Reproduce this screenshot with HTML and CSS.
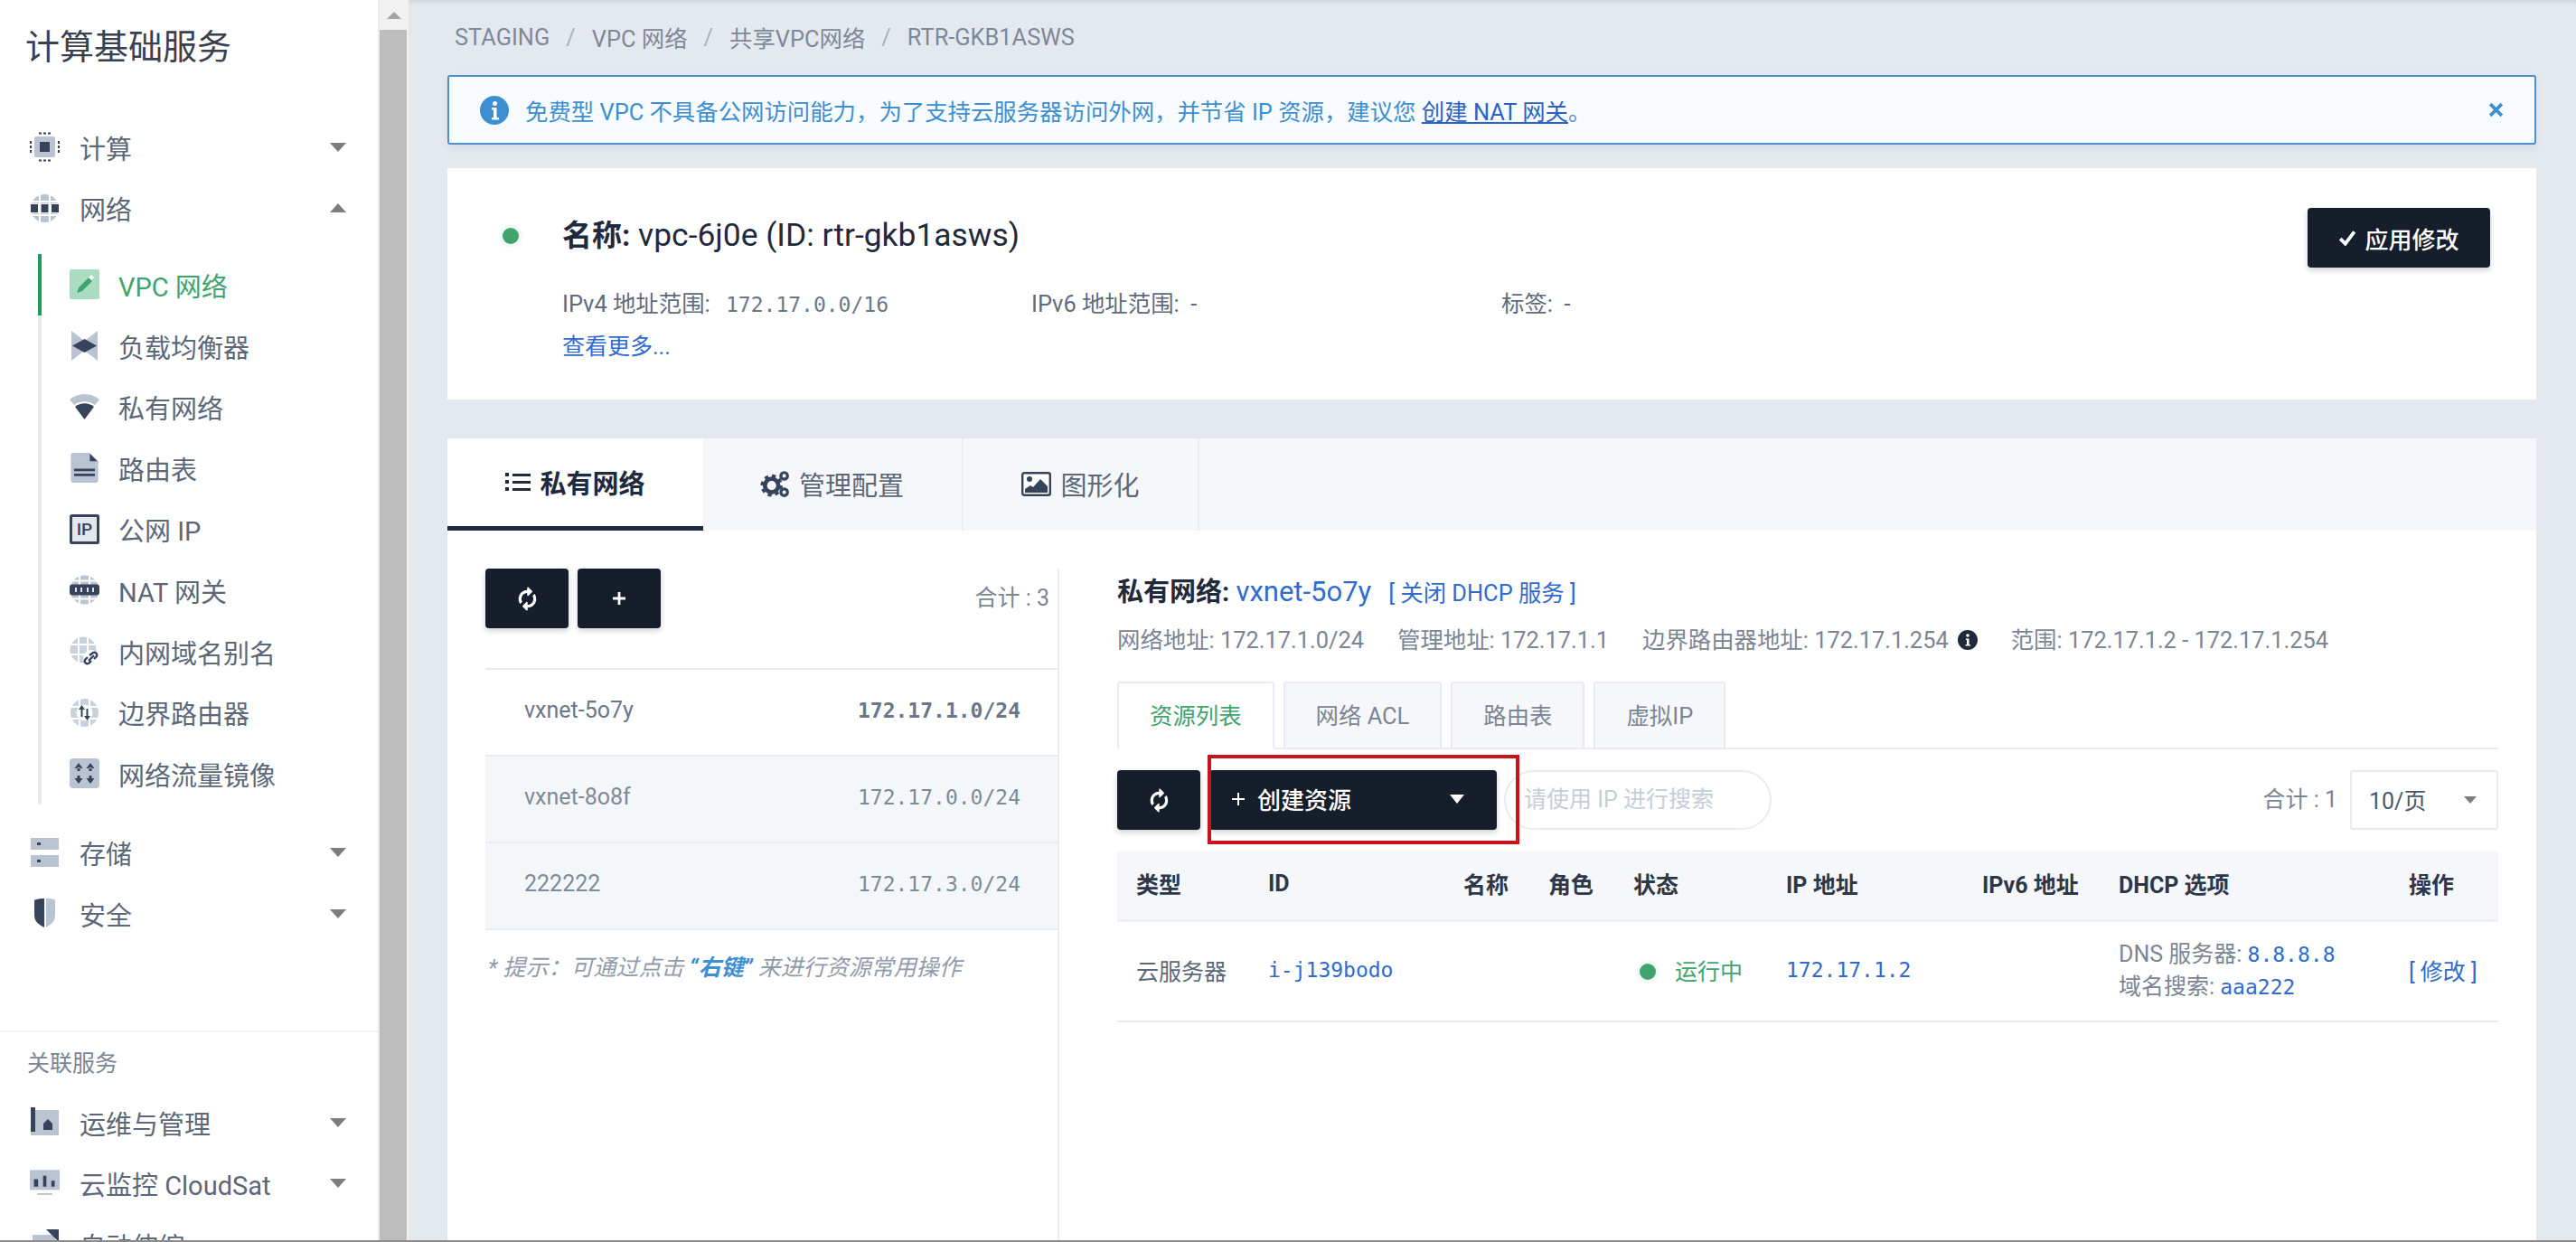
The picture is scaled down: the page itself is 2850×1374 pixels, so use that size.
FILE: index.html

```html
<!DOCTYPE html>
<html lang="zh-CN">
<head>
  <meta charset="UTF-8">
  <title>VPC 网络</title>
  <link rel="stylesheet" href="styles.css">
</head>
<body>
<div class="app">
  <!-- left menu -->
  <nav class="sidebar">
    <div class="side-title">计算基础服务</div>

    <div class="menu-item">
      <svg class="ico" viewBox="0 0 33 33"><rect x="5" y="5" width="23" height="23" rx="2" fill="#b9c3d1"/><rect x="11" y="11" width="11" height="11" fill="#36435a"/><path d="M10 1.500h3M15 1.500h3M20 1.500h3M10 31.500h3M15 31.500h3M20 31.500h3M1 10v3M1 15v3M1 20v3M32 10v3M32 15v3M32 20v3" stroke="#36435a" stroke-width="2.200"/></svg>
      <span class="menu-text">计算</span><i class="caret"></i>
    </div>
    <div class="menu-item">
      <svg class="ico" viewBox="0 0 33 33"><circle cx="16.500" cy="16.500" r="15.500" fill="#b9c3d1"/><path d="M11 1v31M22 1v31M1 9h31M1 24h31" stroke="#fff" stroke-width="2"/><rect x="0" y="11" width="33" height="11" fill="#fff"/><rect x="1" y="12" width="8" height="9" fill="#36435a"/><rect x="12.500" y="12" width="8" height="9" fill="#36435a"/><rect x="24" y="12" width="8" height="9" fill="#36435a"/></svg>
      <span class="menu-text">网络</span><i class="caret up"></i>
    </div>

    <div class="sub-menu">
      <div class="sub-item active">
        <svg class="ico" viewBox="0 0 33 33"><rect width="33" height="33" rx="2" fill="#a9dcc0"/><path d="M8 25l5-2L27 9l-3-3L10 20z" fill="#fff"/><path d="M8 26l2-6 11-11 4 4-11 11z" fill="#3fa46d"/></svg>
        <span>VPC 网络</span>
      </div>
      <div class="sub-item">
        <svg class="ico" viewBox="0 0 33 33"><path d="M2 0l13 10v13L2 33zM31 0L18 10v13l13 10z" fill="#b9c3d1"/><path d="M3 16.500L16.500 9 30 16.500 16.500 24z" fill="#36435a"/></svg>
        <span>负载均衡器</span>
      </div>
      <div class="sub-item">
        <svg class="ico" viewBox="0 0 33 33"><path d="M0 8C9 0 24 0 33 8l-5 6C21 9 12 9 5 14z" fill="#b9c3d1"/><path d="M6 16c6-5 15-5 21 0L16.500 30z" fill="#36435a"/></svg>
        <span>私有网络</span>
      </div>
      <div class="sub-item">
        <svg class="ico" viewBox="0 0 33 36"><path d="M3 0h20l10 10v23a3 3 0 0 1-3 3H3a3 3 0 0 1-3-3V3a3 3 0 0 1 3-3z" fill="#b9c3d1"/><path d="M23 1l9 9h-9z" fill="#36435a"/><path d="M4 19h25v3H4zM4 25h25v3H4z" fill="#36435a"/></svg>
        <span>路由表</span>
      </div>
      <div class="sub-item">
        <svg class="ico" viewBox="0 0 33 33"><rect x="1.500" y="1.500" width="30" height="30" rx="1" fill="#e3e8ef" stroke="#36435a" stroke-width="3"/><text x="16.500" y="23" text-anchor="middle" class="ico-text">IP</text></svg>
        <span>公网 IP</span>
      </div>
      <div class="sub-item">
        <svg class="ico" viewBox="0 0 33 33"><circle cx="16.500" cy="16.500" r="16" fill="#b9c3d1"/><path d="M11 0v33M22 0v33M0 6.500h33M0 26.500h33" stroke="#fff" stroke-width="2"/><rect x="0" y="10.500" width="33" height="12" rx="3" fill="#36435a"/><path d="M7 14v5M13 14v5M20 14v5M26 14v5" stroke="#dfe4ec" stroke-width="2"/></svg>
        <span>NAT 网关</span>
      </div>
      <div class="sub-item">
        <svg class="ico" viewBox="0 0 33 33"><circle cx="15" cy="15" r="14.500" fill="#c9d1dc"/><path d="M10 0v30M20 0v30M0 9h30M0 20h30" stroke="#fff" stroke-width="2"/><circle cx="24" cy="24" r="9" fill="#fff"/><path d="M22 21l4-3a3 3 0 0 1 4 4l-3 3M24 27l-3 3a3 3 0 0 1-4-4l3-3M21 27l6-6" fill="none" stroke="#36435a" stroke-width="2.400"/></svg>
        <span>内网域名别名</span>
      </div>
      <div class="sub-item">
        <svg class="ico" viewBox="0 0 33 33"><circle cx="16.500" cy="16.500" r="15.500" fill="#c9d1dc"/><path d="M11 1v31M22 1v31M1 10h31M1 23h31" stroke="#fff" stroke-width="2"/><circle cx="16.500" cy="16.500" r="9" fill="#fff"/><path d="M13.500 8l-3.500 5h2.500v8h2v-8H17zM19.500 25l3.500-5h-2.500v-8h-2v8H16z" fill="#36435a"/></svg>
        <span>边界路由器</span>
      </div>
      <div class="sub-item">
        <svg class="ico" viewBox="0 0 33 33"><rect width="33" height="33" rx="4" fill="#b9c3d1"/><path d="M10 5l-4.500 6h9zM23 5l-4.500 6h9zM10 28l-4.500-6h9zM23 28l-4.500-6h9zM8.500 10h3v4h-3zM21.500 10h3v4h-3zM8.500 19h3v4h-3zM21.500 19h3v4h-3z" fill="#36435a"/></svg>
        <span>网络流量镜像</span>
      </div>
    </div>

    <div class="menu-item">
      <svg class="ico" viewBox="0 0 33 33"><rect x="1" width="31" height="13" fill="#b9c3d1"/><rect x="1" y="19" width="31" height="13" fill="#b9c3d1"/><rect x="8" y="5" width="4" height="3" fill="#36435a"/><rect x="8" y="24" width="4" height="3" fill="#36435a"/></svg>
      <span class="menu-text">存储</span><i class="caret"></i>
    </div>
    <div class="menu-item">
      <svg class="ico" viewBox="0 0 33 36"><path d="M4 2C9 0 13 0 16 0v35C9 31 4 28 4 20z" fill="#36435a"/><path d="M18 0c3 0 9 0 11 2v18c0 8-5 11-11 15z" fill="#b9c3d1"/></svg>
      <span class="menu-text">安全</span><i class="caret"></i>
    </div>

    <div class="side-sep">关联服务</div>

    <div class="menu-item">
      <svg class="ico" viewBox="0 0 33 33"><rect x="1" y="3" width="31" height="28" fill="#b9c3d1"/><rect x="1" y="0" width="5" height="27" fill="#36435a"/><path d="M15 25v-7l5-5 5 5v7z" fill="#36435a"/></svg>
      <span class="menu-text">运维与管理</span><i class="caret"></i>
    </div>
    <div class="menu-item">
      <svg class="ico" viewBox="0 0 36 33"><rect width="36" height="24" fill="#b9c3d1"/><rect x="9" y="28" width="18" height="2" fill="#b9c3d1"/><path d="M5 11h5v9H5zM16 7h4v13h-4zM26 13h4v7h-4z" fill="#36435a"/></svg>
      <span class="menu-text">云监控 CloudSat</span><i class="caret"></i>
    </div>
    <div class="menu-item">
      <svg class="ico" viewBox="0 0 33 33"><rect x="3" y="6" width="25" height="24" fill="#b9c3d1"/><path d="M18 0h14v14z" fill="#36435a"/></svg>
      <span class="menu-text">自动伸缩</span><i class="caret"></i>
    </div>
  </nav>

  <div class="scrollbar">
    <div class="scroll-btn"><i></i></div>
    <div class="scroll-thumb"></div>
  </div>

  <main class="main">
    <div class="crumbs">
      <span>STAGING</span><b>/</b><span>VPC 网络</span><b>/</b><span>共享VPC网络</span><b>/</b><span>RTR-GKB1ASWS</span>
    </div>

    <div class="alert">
      <svg class="alert-ico" viewBox="0 0 32 32"><circle cx="16" cy="16" r="16" fill="#3d8fd1"/><circle cx="16.500" cy="8.500" r="2.500" fill="#fff"/><path d="M13 13h5.500v11H21v2.500h-8V24h2v-8.500h-2z" fill="#fff"/></svg>
      <span class="alert-text">免费型 VPC 不具备公网访问能力，为了支持云服务器访问外网，并节省 IP 资源，建议您 <a href="#">创建 NAT 网关</a>。</span>
      <svg class="alert-close" viewBox="0 0 16 16"><path d="M2 2l12 12M14 2L2 14" stroke="#3d8fd1" stroke-width="3.400"/></svg>
    </div>

    <section class="info-card">
      <div class="info-head">
        <i class="status-dot"></i>
        <h2 class="info-title"><b>名称:</b> vpc-6j0e (ID: rtr-gkb1asws)</h2>
      </div>
      <button class="btn btn-apply"><svg class="btn-check" viewBox="0 0 18 16"><path d="M2 9l5 5L16 2" fill="none" stroke="#fff" stroke-width="3.400"/></svg>应用修改</button>
      <div class="info-props">
        <div class="prop-a">IPv4 地址范围: <span class="mono">172.17.0.0/16</span></div>
        <div class="prop-b">IPv6 地址范围: &nbsp;-</div>
        <div>标签: &nbsp;-</div>
      </div>
      <a class="more" href="#">查看更多...</a>
    </section>

    <section class="tab-card">
      <div class="tabs">
        <div class="tab active">
          <svg class="tab-ico" viewBox="0 0 28 24"><path d="M0 2h4v4H0zM0 10h4v4H0zM0 18h4v4H0zM8 3h20v3H8zM8 11h20v3H8zM8 19h20v3H8z" fill="#1f2a3c"/></svg>私有网络
        </div>
        <div class="tab tab-b">
          <svg class="tab-ico cogs" viewBox="0 0 30 28"><circle cx="11" cy="16" r="7" fill="none" stroke="#36435a" stroke-width="4.500"/><circle cx="11" cy="16" r="10" fill="none" stroke="#36435a" stroke-width="3" stroke-dasharray="4 3.850"/><circle cx="24" cy="6" r="3.500" fill="none" stroke="#36435a" stroke-width="3"/><circle cx="24" cy="23" r="3.500" fill="none" stroke="#36435a" stroke-width="3"/></svg>管理配置
        </div>
        <div class="tab tab-c">
          <svg class="tab-ico wide" viewBox="0 0 33 27"><rect x="1.200" y="1.200" width="30.600" height="24.600" rx="2" fill="#fff" stroke="#36435a" stroke-width="2.400"/><circle cx="9" cy="8" r="3" fill="#36435a"/><path d="M4 23v-4l6-4 3 2 8-9 8 8v7z" fill="#36435a"/></svg>图形化
        </div>
        <div class="tab-rest"></div>
      </div>

      <div class="tab-body">
        <!-- network list -->
        <div class="left-panel">
          <div class="left-tools">
            <button class="btn btn-sq"><svg class="refresh" viewBox="0 0 1792 1792"><path d="M1639 1056q0 5-1 7-64 268-268 434.500t-478 166.500q-146 0-282.500-55t-243.500-157l-129 129q-19 19-45 19t-45-19-19-45v-448q0-26 19-45t45-19h448q26 0 45 19t19 45-19 45l-137 137q71 66 161 102t187 36q134 0 250-65t186-179q11-17 53-117 8-23 30-23h192q13 0 22.500 9.500t9.500 22.500zm25-800v448q0 26-19 45t-45 19h-448q-26 0-45-19t-19-45 19-45l138-138q-148-137-349-137-134 0-250 65t-186 179q-11 17-53 117-8 23-30 23h-199q-13 0-22.500-9.500t-9.500-22.500v-7q65-268 270-434.500t480-166.500q146 0 284 55.500t245 156.500l130-129q19-19 45-19t45 19 19 45z" fill="#fff"/></svg></button>
            <button class="btn btn-sq"><svg class="plus" viewBox="0 0 16 16"><path d="M8 1v14M1 8h14" stroke="#fff" stroke-width="2.800"/></svg></button>
            <span class="total">合计 : 3</span>
          </div>
          <div class="net-row first"><span class="net-name">vxnet-5o7y</span><span class="mono strong">172.17.1.0/24</span></div>
          <div class="net-row alt"><span class="net-name">vxnet-8o8f</span><span class="mono">172.17.0.0/24</span></div>
          <div class="net-row alt"><span class="net-name">222222</span><span class="mono">172.17.3.0/24</span></div>
          <p class="tip">* 提示：可通过点击 <b>“右键”</b> 来进行资源常用操作</p>
        </div>

        <!-- selected network -->
        <div class="right-panel">
          <div class="vx-title"><b>私有网络:</b> <a href="#">vxnet-5o7y</a><a class="vx-dhcp" href="#">[ 关闭 DHCP 服务 ]</a></div>
          <div class="vx-props">
            <span>网络地址: 172.17.1.0/24</span>
            <span>管理地址: 172.17.1.1</span>
            <span class="with-ico">边界路由器地址: 172.17.1.254<svg class="info-ico" viewBox="0 0 22 22"><circle cx="11" cy="11" r="11" fill="#1f2a3c"/><circle cx="11" cy="6" r="1.800" fill="#fff"/><path d="M9 9.500h3.500V16H14v1.500H8.500V16H10v-5H9z" fill="#fff"/></svg></span>
            <span>范围: 172.17.1.2 - 172.17.1.254</span>
          </div>

          <div class="sub-tabs">
            <div class="sub-tab active">资源列表</div>
            <div class="sub-tab">网络 ACL</div>
            <div class="sub-tab">路由表</div>
            <div class="sub-tab">虚拟IP</div>
          </div>

          <div class="toolbar">
            <button class="btn btn-refresh"><svg class="refresh" viewBox="0 0 1792 1792"><path d="M1639 1056q0 5-1 7-64 268-268 434.500t-478 166.500q-146 0-282.500-55t-243.500-157l-129 129q-19 19-45 19t-45-19-19-45v-448q0-26 19-45t45-19h448q26 0 45 19t19 45-19 45l-137 137q71 66 161 102t187 36q134 0 250-65t186-179q11-17 53-117 8-23 30-23h192q13 0 22.500 9.500t9.500 22.500zm25-800v448q0 26-19 45t-45 19h-448q-26 0-45-19t-19-45 19-45l138-138q-148-137-349-137-134 0-250 65t-186 179q-11 17-53 117-8 23-30 23h-199q-13 0-22.500-9.500t-9.500-22.500v-7q65-268 270-434.500t480-166.500q146 0 284 55.500t245 156.500l130-129q19-19 45-19t45 19 19 45z" fill="#fff"/></svg></button>
            <div class="create-wrap">
              <button class="btn btn-create"><svg class="plus" viewBox="0 0 16 16"><path d="M8 1v14M1 8h14" stroke="#fff" stroke-width="2"/></svg><span>创建资源</span><i class="caret white"></i></button>
              <div class="red-box"></div>
            </div>
            <div class="search">请使用 IP 进行搜索</div>
            <span class="total total-r">合计 : 1</span>
            <div class="page-size"><span>10/页</span><i class="caret small"></i></div>
          </div>

          <table class="res-table">
            <thead>
              <tr>
                <th class="c-type">类型</th><th class="c-id">ID</th><th class="c-name">名称</th><th class="c-role">角色</th><th class="c-state">状态</th><th class="c-ip">IP 地址</th><th class="c-ip6">IPv6 地址</th><th class="c-dhcp">DHCP 选项</th><th>操作</th>
              </tr>
            </thead>
            <tbody>
              <tr>
                <td>云服务器</td>
                <td><a class="mono" href="#">i-j139bodo</a></td>
                <td></td>
                <td></td>
                <td class="state"><i class="status-dot"></i>运行中</td>
                <td><a class="mono" href="#">172.17.1.2</a></td>
                <td></td>
                <td class="dhcp">DNS 服务器: <a class="mono" href="#">8.8.8.8</a><br>域名搜索: <a class="mono" href="#">aaa222</a></td>
                <td><a href="#">[ 修改 ]</a></td>
              </tr>
            </tbody>
          </table>
        </div>
      </div>
    </section>
  </main>
</div>
</body>
</html>
```

FILE: styles.css

```css
* {
  box-sizing: border-box;
}
html, body {
  margin: 0;
  height: 100%;
  overflow: hidden;
}
body {
  font-family: Roboto, "Noto Sans CJK SC", sans-serif;
  font-size: 25px;
  color: #5f6b7c;
  background: #e4e9f0;
}
a {
  color: #2f6bd0;
  text-decoration: none;
}
.mono {
  font-family: "DejaVu Sans Mono", monospace;
  font-size: 23px;
}
.app {
  display: flex;
  height: 1374px;
  overflow: hidden;
  border-bottom: 2px solid #8c8c8c;
}

/* sidebar */
.sidebar {
  width: 418px;
  flex: none;
  background: #fff;
  overflow: hidden;
  color: #5c6778;
}
.side-title {
  height: 129px;
  padding: 28px 0 0 28px;
  font-size: 38px;
  line-height: 48px;
  color: #39414f;
}
.menu-item {
  display: flex;
  align-items: center;
  height: 67.6px;
  padding-left: 33px;
  font-size: 29px;
}
.ico {
  width: 33px;
  height: 33px;
  flex: none;
}
.ico-text {
  font-family: Roboto, sans-serif;
  font-size: 19px;
  font-weight: 500;
  fill: #36435a;
}
.menu-text {
  margin-left: 22px;
  flex: 1;
}
.caret {
  width: 0;
  height: 0;
  margin-right: 35px;
  border-left: 9px solid transparent;
  border-right: 9px solid transparent;
  border-top: 10px solid #7d7d7d;
}
.caret.up {
  border-top: 0;
  border-bottom: 10px solid #7d7d7d;
}
.sub-menu {
  margin: 17px 0 20px 42px;
  border-left: 4px solid #e6ebf2;
}
.sub-item {
  display: flex;
  align-items: center;
  height: 67.6px;
  margin-left: -4px;
  padding-left: 31px;
  border-left: 4px solid transparent;
  font-size: 29px;
}
.sub-item span {
  margin-left: 21px;
}
.sub-item.active {
  border-left-color: #1d9c5a;
  color: #3fa46d;
}
.side-sep {
  height: 68px;
  margin-top: 95px;
  padding: 17px 0 0 30px;
  border-top: 2px solid #eef1f5;
  font-size: 25px;
  line-height: 36px;
  color: #7b8594;
}
.scrollbar {
  width: 34px;
  flex: none;
  background: #f1f1f1;
  border-left: 2px solid #ebebeb;
}
.scroll-btn {
  display: flex;
  justify-content: center;
  align-items: center;
  height: 33px;
}
.scroll-btn i {
  border-left: 8px solid transparent;
  border-right: 8px solid transparent;
  border-bottom: 8px solid #a3a3a3;
}
.scroll-thumb {
  height: 1340px;
  margin-right: 2px;
  background: #bdbdbd;
}

/* main column */
.main {
  flex: 1;
  min-width: 0;
  padding: 0 44px 0 43px;
  box-shadow: inset 0 6px 6px -5px rgba(0,0,0,0.12);
}
.crumbs {
  display: flex;
  align-items: center;
  gap: 18px;
  height: 83px;
  padding: 0 0 2px 8px;
  font-size: 25.4px;
  color: #7f8895;
}
.crumbs b {
  font-weight: 400;
  color: #aab2be;
}
.alert {
  display: flex;
  align-items: center;
  height: 77px;
  padding: 0 34px;
  background: #f8fbff;
  border: 2px solid #4a90d2;
  border-radius: 3px;
  box-shadow: 0 3px 8px rgba(60,80,110,0.08);
  color: #3d8fd1;
}
.alert-ico {
  width: 32px;
  height: 32px;
  flex: none;
  margin-right: 18px;
}
.alert-text {
  flex: 1;
  font-size: 25.4px;
}
.alert-text a {
  color: #2c62c4;
  text-decoration: underline;
}
.alert-close {
  width: 17px;
  height: 17px;
  flex: none;
}

.info-card {
  position: relative;
  height: 256px;
  margin-top: 26px;
  padding: 50px 0 0 61px;
  background: #fff;
}
.info-head {
  display: flex;
  align-items: center;
  height: 44px;
}
.status-dot {
  display: inline-block;
  width: 18px;
  height: 18px;
  flex: none;
  border-radius: 50%;
  background: #3fa46d;
  box-shadow: 0 0 0 4px #f1faf5;
}
.info-head .status-dot {
  margin-top: 6px;
}
.info-title {
  margin: 0 0 0 48px;
  font-size: 35.4px;
  font-weight: 400;
  color: #1f2a3c;
}
.info-title b {
  font-size: 33px;
  font-weight: 700;
}
.info-props {
  display: flex;
  margin: 38px 0 0 66px;
  font-size: 25.4px;
  line-height: 36px;
}
.info-props .mono {
  margin-left: 11px;
  color: #6b7789;
}
.prop-a {
  width: 519px;
}
.prop-b {
  width: 520px;
}
.more {
  display: block;
  margin: 11px 0 0 66px;
  line-height: 36px;
}
.btn {
  display: inline-flex;
  align-items: center;
  justify-content: center;
  height: 66px;
  padding: 0;
  border: 0;
  border-radius: 4px;
  background: #161e2b;
  color: #fff;
  font-family: inherit;
  font-size: 26px;
  box-shadow: 0 3px 6px rgba(0,0,0,0.18);
}
.btn-apply {
  position: absolute;
  top: 44px;
  right: 51px;
  width: 202px;
  font-weight: 500;
}
.btn-check {
  width: 20px;
  height: 18px;
  margin-right: 9px;
}

/* tabbed panel */
.tab-card {
  height: 887px;
  margin-top: 43px;
  background: #fff;
}
.tabs {
  display: flex;
  height: 102px;
  background: #f5f7fa;
}
.tab {
  display: flex;
  align-items: center;
  justify-content: center;
  width: 288px;
  padding-bottom: 2px;
  border-right: 2px solid #eceff4;
  font-size: 29px;
  color: #5c6778;
}
.tab.active {
  width: 283px;
  padding-bottom: 1px;
  border-right: 0;
  border-bottom: 5px solid #1f2a40;
  background: #fff;
  color: #1f2a3c;
  font-weight: 700;
}
.tab-c {
  width: 261px;
}
.tab-rest {
  flex: 1;
}
.tab-ico {
  width: 28px;
  height: 24px;
  margin-right: 10px;
}
.tab-ico.cogs {
  width: 32px;
  height: 30px;
  overflow: visible;
}
.tab-ico.wide {
  width: 33px;
  height: 27px;
}
.tab-body {
  display: flex;
  gap: 64px;
  padding: 42px 42px 0;
}
.left-panel {
  width: 635px;
  flex: none;
  height: 745px;
  border-right: 2px solid #e8ecf2;
}
.left-tools {
  display: flex;
  gap: 10px;
  height: 110px;
  padding-right: 9px;
}
.btn-sq {
  width: 92px;
}
.refresh {
  width: 23px;
  height: 23px;
  transform: rotate(-45deg);
}
.plus {
  width: 16px;
  height: 16px;
}
.total {
  margin-left: auto;
  line-height: 66px;
  color: #7b8594;
}
.net-row {
  display: flex;
  align-items: center;
  justify-content: space-between;
  height: 96px;
  padding: 0 41px 4px 43px;
  border-top: 2px solid #e8ecf2;
  color: #7f8a99;
}
.net-name {
  margin-bottom: 2px;
}
.net-row.first {
  color: #6b7789;
}
.net-row .strong {
  font-weight: 700;
}
.net-row.alt {
  background: #f4f7fa;
}
.tip {
  margin: 0;
  padding: 24px 0 0 3px;
  border-top: 2px solid #e8ecf2;
  font-style: italic;
  line-height: 36px;
  color: #929baa;
}
.tip b {
  color: #3d8fd1;
}
.right-panel {
  flex: 1;
  min-width: 0;
}
.vx-title {
  font-size: 29px;
  line-height: 52px;
  margin-bottom: 8px;
  color: #1f2a3c;
}
.vx-title a {
  font-size: 31px;
}
.vx-title b {
  font-weight: 700;
}
.vx-title .vx-dhcp {
  margin-left: 19px;
  font-size: 25.4px;
}
.vx-props {
  display: flex;
  gap: 37px;
  font-size: 25.4px;
  line-height: 36px;
  color: #7b8594;
}
.with-ico {
  display: flex;
  align-items: center;
}
.info-ico {
  width: 22px;
  height: 22px;
  margin-left: 10px;
}
.sub-tabs {
  display: flex;
  gap: 10px;
  height: 75px;
  margin-top: 28px;
  border-bottom: 2px solid #e8ecf2;
}
.sub-tab {
  display: flex;
  align-items: center;
  padding: 0 34px 3px;
  height: 75px;
  border: 2px solid #e8ecf2;
  border-radius: 3px 3px 0 0;
  background: #f5f7fa;
  color: #7b8594;
  font-size: 25.4px;
}
.sub-tab.active {
  border-bottom-color: #fff;
  background: #fff;
  color: #3fa46d;
}
.toolbar {
  display: flex;
  align-items: center;
  height: 66px;
  margin-top: 23px;
}
.btn-refresh {
  width: 92px;
  margin-right: 10px;
}
.create-wrap {
  position: relative;
}
.btn-create {
  width: 318px;
  padding: 0 36px 3px 24px;
  justify-content: flex-start;
  font-weight: 500;
}
.btn-create span {
  flex: 1;
  margin-left: 13px;
  text-align: left;
}
.caret.white {
  margin-right: 0;
  border-left-width: 8px;
  border-right-width: 8px;
  border-top-color: #fff;
}
.caret.small {
  margin-right: 0;
  border-left-width: 7px;
  border-right-width: 7px;
  border-top-width: 8px;
}
.red-box {
  position: absolute;
  top: -17px;
  left: -2px;
  width: 345px;
  height: 99px;
  border: 4px solid #c8121c;
  pointer-events: none;
}
.search {
  width: 296px;
  height: 66px;
  margin-left: 8px;
  padding-left: 20px;
  border: 2px solid #e8ecf2;
  border-radius: 33px;
  line-height: 62px;
  color: #c5cdd8;
}
.total-r {
  margin-right: 14px;
}
.page-size {
  display: flex;
  align-items: center;
  justify-content: space-between;
  width: 164px;
  height: 66px;
  padding: 0 22px 0 19px;
  border: 2px solid #e8ecf2;
  border-radius: 3px;
  color: #4c5768;
}
.page-size span {
  margin-bottom: 3px;
}
.res-table {
  width: 100%;
  margin-top: 23px;
  border-collapse: collapse;
  table-layout: fixed;
}
.res-table th {
  height: 77px;
  padding: 0 0 3px 21px;
  border-bottom: 3px solid #eef1f5;
  background: #f5f7fa;
  color: #2d3748;
  font-weight: 700;
  text-align: left;
}
.res-table td {
  height: 112px;
  padding: 0 0 3px 21px;
  border-bottom: 2px solid #e8ecf2;
  color: #5c6778;
}
.c-type { width: 146px; }
.c-id { width: 216px; }
.c-name { width: 94px; }
.c-role { width: 94px; }
.c-state { width: 169px; }
.c-ip { width: 217px; }
.c-ip6 { width: 151px; }
.c-dhcp { width: 321px; }
.res-table td.state {
  color: #3fa46d;
}
.state .status-dot {
  margin: 0 21px 0 7px;
}
.res-table td.dhcp {
  padding-bottom: 0;
  line-height: 35px;
  color: #7b8594;
}
```
